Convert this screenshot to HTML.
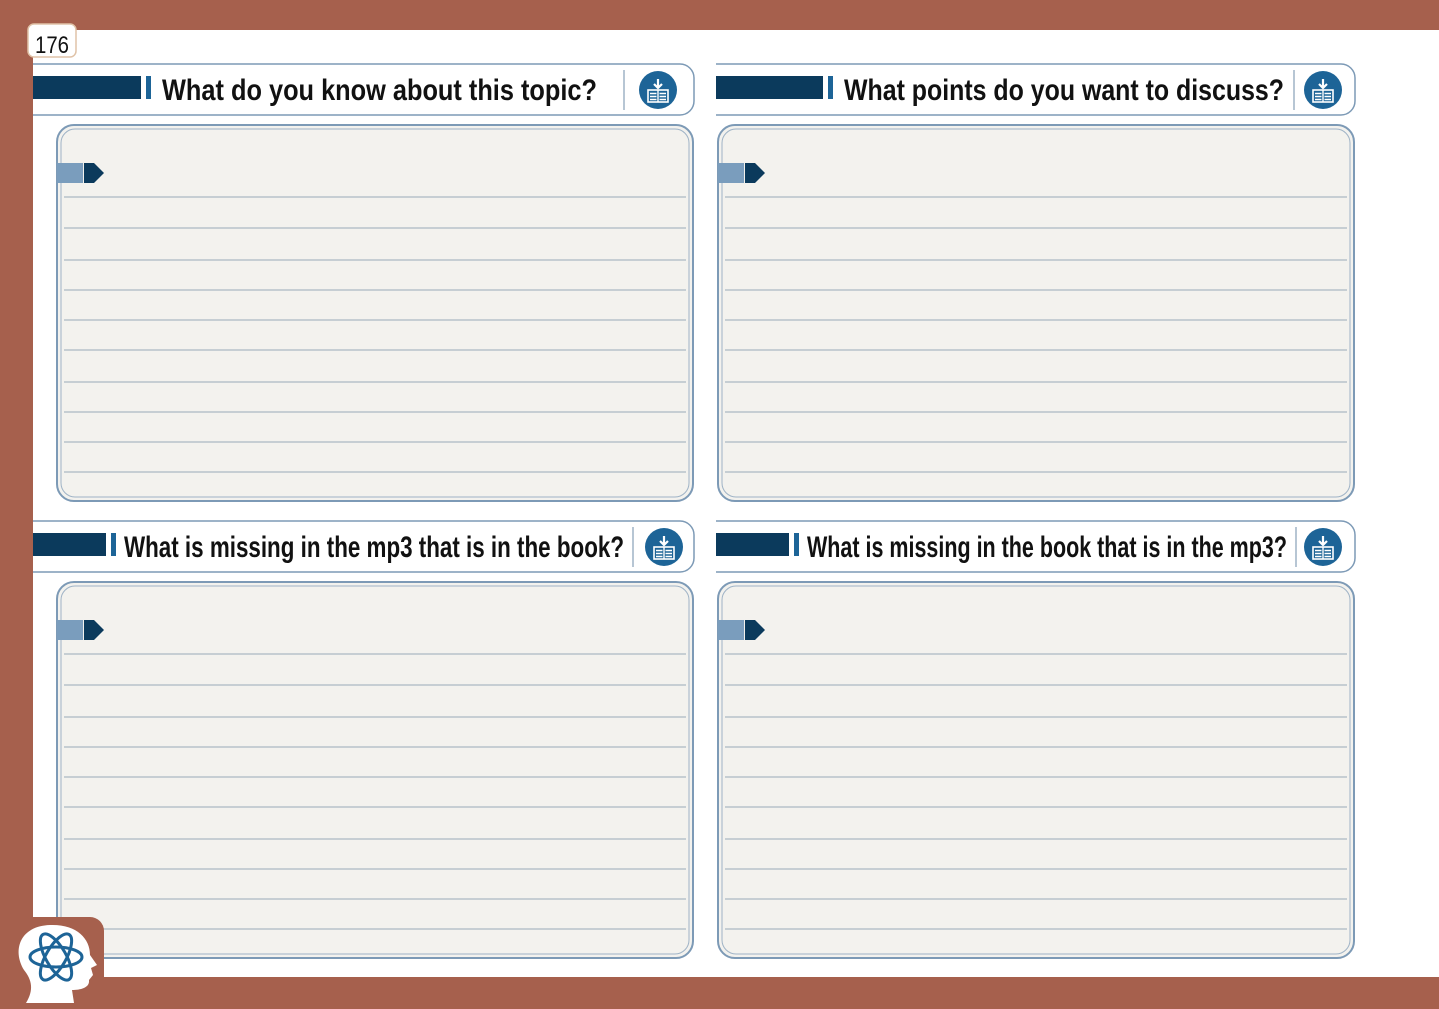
<!DOCTYPE html>
<html><head><meta charset="utf-8"><style>
html,body{margin:0;padding:0;background:#A6604D;}
svg{display:block}
text{font-family:"Liberation Sans Narrow","Liberation Sans",sans-serif;font-size:30px;fill:#111;font-weight:bold;}
</style></head><body>
<svg width="1439" height="1009" viewBox="0 0 1439 1009" xmlns="http://www.w3.org/2000/svg">
<defs>
<g id="icon">
<circle r="19" fill="#1d6497"/>
<path d="M0,-11 V-3 M-4,-6 L0,-2 L4,-6" stroke="#fff" stroke-width="2.2" fill="none"/>
<rect x="-10" y="0" width="20" height="12" fill="none" stroke="#fff" stroke-width="1.6"/>
<path d="M-8,3.5H-1.5M1.5,3.5H8M-8,6.5H-1.5M1.5,6.5H8M-8,9.5H-1.5M1.5,9.5H8M0,0V12" stroke="#fff" stroke-width="1.4"/>
</g>
<g id="box">
<rect x="57" y="125" width="636" height="376" rx="17" fill="#f3f2ee" stroke="#7d9ab6" stroke-width="2"/>
<rect x="61" y="129" width="628" height="368" rx="14" fill="none" stroke="#9fb3c6" stroke-width="1"/>
<g stroke="#9aa9b8" stroke-width="1">
<line x1="64" x2="686" y1="197" y2="197"/><line x1="64" x2="686" y1="228" y2="228"/>
<line x1="64" x2="686" y1="260" y2="260"/><line x1="64" x2="686" y1="290" y2="290"/>
<line x1="64" x2="686" y1="320" y2="320"/><line x1="64" x2="686" y1="350" y2="350"/>
<line x1="64" x2="686" y1="382" y2="382"/><line x1="64" x2="686" y1="412" y2="412"/>
<line x1="64" x2="686" y1="442" y2="442"/><line x1="64" x2="686" y1="472" y2="472"/>
</g>
<rect x="57" y="163" width="26" height="20" fill="#7a9dbd"/>
<path d="M84,163 H94 L104,173 L94,183 H84 Z" fill="#0b3a5c"/>
</g>
<path id="hdrL" d="M33,64 H680 A14,14 0 0 1 694,78 V101 A14,14 0 0 1 680,115 H33" fill="#fff" stroke="#7d9ab6" stroke-width="1.5"/>
<path id="hdrR" d="M716,64 H1341 A14,14 0 0 1 1355,78 V101 A14,14 0 0 1 1341,115 H716" fill="#fff" stroke="#7d9ab6" stroke-width="1.5"/>
</defs>
<rect x="33" y="30" width="1406" height="947" fill="#fff"/>
<rect x="28" y="24" width="48" height="33" rx="6" fill="#fff" stroke="#e0c3a8" stroke-width="1.5"/>
<text x="35" y="53" style="font-size:24px;font-weight:normal" textLength="34" lengthAdjust="spacingAndGlyphs">176</text>

<!-- row1 left -->
<use href="#box"/><use href="#hdrL"/>
<rect x="33" y="76" width="108" height="23" fill="#0b3a5c"/><rect x="146" y="76" width="5" height="23" fill="#1d6497"/>
<text x="162" y="100" textLength="435" lengthAdjust="spacingAndGlyphs">What do you know about this topic?</text>
<line x1="624" x2="624" y1="70" y2="110" stroke="#9fb3c6" stroke-width="1.5"/>
<use href="#icon" x="658" y="90"/>

<!-- row1 right -->
<use href="#box" x="661"/><use href="#hdrR"/>
<rect x="716" y="76" width="107" height="23" fill="#0b3a5c"/><rect x="828" y="76" width="5" height="23" fill="#1d6497"/>
<text x="844" y="100" textLength="440" lengthAdjust="spacingAndGlyphs">What points do you want to discuss?</text>
<line x1="1294" x2="1294" y1="70" y2="110" stroke="#9fb3c6" stroke-width="1.5"/>
<use href="#icon" x="1323" y="90"/>

<!-- row2 left -->
<use href="#box" y="457"/><use href="#hdrL" y="457"/>
<rect x="33" y="533" width="73" height="23" fill="#0b3a5c"/><rect x="111" y="533" width="5" height="23" fill="#1d6497"/>
<text x="124" y="557" textLength="500" lengthAdjust="spacingAndGlyphs">What is missing in the mp3 that is in the book?</text>
<line x1="633" x2="633" y1="527" y2="567" stroke="#9fb3c6" stroke-width="1.5"/>
<use href="#icon" x="664" y="547"/>

<!-- row2 right -->
<use href="#box" x="661" y="457"/><use href="#hdrR" y="457"/>
<rect x="716" y="533" width="73" height="23" fill="#0b3a5c"/><rect x="794" y="533" width="5" height="23" fill="#1d6497"/>
<text x="807" y="557" textLength="480" lengthAdjust="spacingAndGlyphs">What is missing in the book that is in the mp3?</text>
<line x1="1296" x2="1296" y1="527" y2="567" stroke="#9fb3c6" stroke-width="1.5"/>
<use href="#icon" x="1323" y="547"/>

<!-- bottom-left logo block -->
<path d="M0,917 H90 A14,14 0 0 1 104,931 V1009 H0 Z" fill="#A6604D"/>
<path d="M26,1003 C34,990 32,980 24,970 C12,950 20,926 50,925 C76,924 90,938 90,955 L97,965 L91,968 L93,975 L89,980 C90,988 80,990 72,990 L74,1003 Z" fill="#fff"/>
<g fill="none" stroke="#1d6497" stroke-width="3" transform="translate(56,957)">
<ellipse rx="26" ry="10"/>
<ellipse rx="26" ry="10" transform="rotate(60)"/>
<ellipse rx="26" ry="10" transform="rotate(-60)"/>
</g>
</svg>
</body></html>
